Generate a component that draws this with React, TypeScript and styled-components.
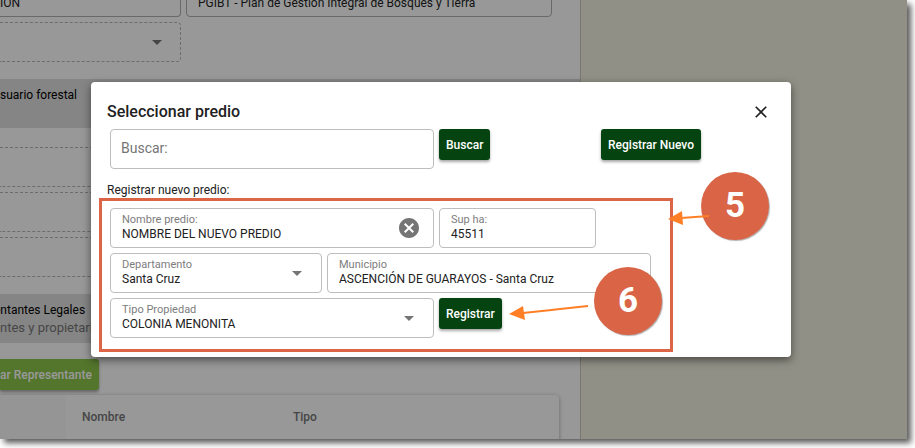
import React, { useState } from "react";
import styled, { createGlobalStyle, css } from "styled-components";
import { MdArrowDropDown, MdCancel, MdClose } from "react-icons/md";

const GlobalStyle = createGlobalStyle`
  * { box-sizing: border-box; }
  body { margin: 0; background: #fff; overflow: hidden; }
  body, button, input, select { font-family: Roboto, sans-serif; }
`;

const Frame = styled.div`
  position: relative;
  height: calc(100vh - 9px);
  margin-right: 8px;
  overflow: hidden;
  font-size: 12px;
  line-height: 16px;
`;

const Shell = styled.div`
  padding-bottom: 9px;
  & > ${Frame} { box-shadow: 4px 4px 6px rgba(0, 0, 0, 0.65); }
`;

const Page = styled.div`
  display: flex;
  height: 100%;
  background: #f0f0df;
`;

const Content = styled.main`
  flex: 0 1 581px;
  height: 100%;
  overflow: hidden;
  background: #fefefe;
  border-right: 1px solid #c8c8b8;
`;

const PageRow = styled.div`
  display: flex;
  gap: 5px;
  padding-right: 28px;
`;

const ScrolledRow = styled(PageRow)`
  margin-top: -23px;
  margin-bottom: 5px;
`;

const PageBox = styled.div<{ $width: number; $dashed?: boolean; $cut?: boolean }>`
  display: flex;
  align-items: center;
  flex: 0 1 ${(p) => p.$width}px;
  height: 40px;
  padding: 12px 11px 0;
  border: 1px ${(p) => (p.$dashed ? "dashed #b4b4b4" : "solid #b0b0b0")};
  border-radius: 4px;
  color: #222;
  white-space: nowrap;
  ${(p) =>
    p.$cut &&
    css`
      padding-left: 0;
      border-left: 0;
      border-radius: 0 4px 4px 0;
    `}
`;

const PageSelect = styled(PageBox)`
  justify-content: flex-end;
  padding: 0 11px;
  color: #757575;
`;

const Band = styled.section`
  height: 49px;
  margin: 17px 0 19px;
  padding-top: 8px;
  background: #dedede;
`;

const LegalBand = styled(Band)`
  margin-bottom: 16px;
`;

const BandTitle = styled.div`
  color: #000;
`;

const LegalTitle = styled(BandTitle)`
  text-indent: -6px;
`;

const BandText = styled.div`
  margin-top: 2px;
  color: #757575;
  font-size: 13px;
`;

const Stack = styled.div`
  display: grid;
  gap: 5px;
  padding-right: 28px;
`;

const Button = styled.button<{ $tone?: "dark" | "light" }>`
  height: 31px;
  padding: 0 7px;
  border: 0;
  border-radius: 3px;
  background: ${(p) => (p.$tone === "light" ? "#8bc34a" : "#054311")};
  color: #fff;
  font-size: 12px;
  font-weight: 500;
  white-space: nowrap;
  box-shadow: 0 2px 3px rgba(0, 0, 0, 0.35);
`;

const RepresentativeButton = styled(Button)`
  display: block;
  padding-left: 0;
  border-radius: 0 3px 3px 0;
`;

const Table = styled.table`
  width: calc(100% - 21px);
  height: 60px;
  margin-top: 5px;
  border-collapse: collapse;
  border-radius: 0 4px 0 0;
  background: #fefefe;
  box-shadow: 0 1px 4px rgba(0, 0, 0, 0.35);
  color: #757575;
  th { padding: 0 16px 16px; text-align: left; font-weight: 500; }
  th:first-child { width: 66px; background: #f8f8f8; }
  th:nth-child(2) { width: 211px; }
`;

const Backdrop = styled.div`
  position: absolute;
  inset: 0;
  display: flex;
  align-items: center;
  justify-content: center;
  padding-right: 25px;
  background: rgba(0, 0, 0, 0.4);
`;

const Dialog = styled.section`
  position: relative;
  width: 700px;
  max-width: 100%;
  padding: 16px 16px 19px;
  border-radius: 4px;
  background: #fff;
  box-shadow: 0 3px 9px rgba(0, 0, 0, 0.5);
`;

const DialogHeader = styled.header`
  display: flex;
  align-items: center;
  justify-content: space-between;
  height: 28px;
  padding-right: 4px;
`;

const DialogTitle = styled.h2`
  margin: 0;
  color: #212121;
  font-size: 16px;
  font-weight: 500;
  line-height: 24px;
`;

const IconButton = styled.button`
  display: flex;
  align-items: center;
  justify-content: center;
  padding: 0;
  border: 0;
  background: none;
  color: inherit;
`;

const FormRow = styled.div`
  display: flex;
  align-items: flex-start;
  gap: 5px;
  padding-left: 3px;
`;

const SearchRow = styled(FormRow)`
  margin-top: 3px;
  padding-right: 74px;
  & > :last-child { margin-left: auto; }
`;

const SearchInput = styled.input`
  flex: 0 1 324px;
  min-width: 0;
  height: 40px;
  padding: 0 10px 2px;
  border: 1px solid #bdbdbd;
  border-radius: 4px;
  outline: 0;
  color: #212121;
  font-size: 14px;
  &::placeholder { color: #757575; opacity: 1; }
`;

const SectionLabel = styled.p`
  margin: 13px 0 10px;
  color: #212121;
`;

const Form = styled.form`
  position: relative;
  display: grid;
  gap: 5px;
`;

const Highlight = styled.div`
  position: absolute;
  inset: -10px 102px -14px -8px;
  border: 3px solid #dc6547;
  pointer-events: none;
`;

const FieldBox = styled.div<{ $width: number }>`
  display: flex;
  align-items: center;
  flex: 0 1 ${(p) => p.$width}px;
  min-width: 0;
  height: 40px;
  padding: 0 12px 0 11px;
  border: 1px solid #bdbdbd;
  border-radius: 4px;
  color: #757575;
`;

const FieldBody = styled.div`
  display: flex;
  flex: 1;
  flex-direction: column;
  min-width: 0;
`;

const FieldLabel = styled.label`
  color: #7d7d7d;
  font-size: 11px;
  line-height: 12px;
`;

const controlStyle = css`
  width: 100%;
  height: 16px;
  padding: 0;
  border: 0;
  outline: 0;
  background: transparent;
  color: #212121;
  font-size: 12px;
  line-height: 16px;
`;

const TextInput = styled.input`
  ${controlStyle}
`;

const Select = styled.select`
  ${controlStyle}
  appearance: none;
`;

const Arrows = styled.svg`
  position: absolute;
  inset: 0;
  width: 700px;
  height: 275px;
  pointer-events: none;
`;

const StepBadge = styled.div<{ $left: number; $top: number }>`
  position: absolute;
  left: ${(p) => p.$left}px;
  top: ${(p) => p.$top}px;
  display: flex;
  align-items: center;
  justify-content: center;
  width: 68px;
  height: 68px;
  border-radius: 50%;
  background: #d96446;
  box-shadow: 1px 1px 1px rgba(0, 0, 0, 0.3);
  color: #fff;
  font: 700 35px/40px Roboto, sans-serif;
`;

interface FieldProps {
  id: string;
  label: string;
  width: number;
  initial: string;
  clearable?: boolean;
}

function TextField({ id, label, width, initial, clearable }: FieldProps) {
  const [value, setValue] = useState(initial);
  return (
    <FieldBox $width={width}>
      <FieldBody>
        <FieldLabel htmlFor={id}>{label}</FieldLabel>
        <TextInput id={id} value={value} onChange={(e) => setValue(e.target.value)} />
      </FieldBody>
      {clearable && (
        <IconButton type="button" aria-label="Borrar" onClick={() => setValue("")}>
          <MdCancel size={24} />
        </IconButton>
      )}
    </FieldBox>
  );
}

function SelectField({ id, label, width, initial }: FieldProps) {
  return (
    <FieldBox $width={width}>
      <FieldBody>
        <FieldLabel htmlFor={id}>{label}</FieldLabel>
        <Select id={id} defaultValue={initial}>
          <option>{initial}</option>
        </Select>
      </FieldBody>
      <MdArrowDropDown size={24} />
    </FieldBox>
  );
}

export default function App() {
  return (
    <Shell>
      <GlobalStyle />
      <Frame>
        <Page>
          <Content>
            <ScrolledRow>
              <PageBox $width={181} $cut>ION</PageBox>
              <PageBox $width={366}>PGIBT - Plan de Gestión Integral de Bosques y Tierra</PageBox>
            </ScrolledRow>
            <PageRow>
              <PageSelect $width={181} $dashed $cut>
                <MdArrowDropDown size={24} />
              </PageSelect>
            </PageRow>
            <Band>
              <BandTitle>suario forestal</BandTitle>
            </Band>
            <Stack>
              <PageBox $width={552} $dashed $cut />
              <PageBox $width={552} $dashed $cut />
              <PageBox $width={552} $dashed $cut />
            </Stack>
            <LegalBand>
              <LegalTitle>entantes Legales</LegalTitle>
              <BandText>ntes y propietarios</BandText>
            </LegalBand>
            <RepresentativeButton $tone="light">ar Representante</RepresentativeButton>
            <Table>
              <thead>
                <tr>
                  <th />
                  <th>Nombre</th>
                  <th>Tipo</th>
                </tr>
              </thead>
            </Table>
          </Content>
        </Page>
        <Backdrop>
          <Dialog role="dialog" aria-labelledby="dialog-title">
            <DialogHeader>
              <DialogTitle id="dialog-title">Seleccionar predio</DialogTitle>
              <IconButton type="button" aria-label="Cerrar">
                <MdClose size={20} color="#212121" />
              </IconButton>
            </DialogHeader>
            <SearchRow>
              <SearchInput aria-label="Buscar" placeholder="Buscar:" />
              <Button type="button">Buscar</Button>
              <Button type="button">Registrar Nuevo</Button>
            </SearchRow>
            <SectionLabel>Registrar nuevo predio:</SectionLabel>
            <Form onSubmit={(e) => e.preventDefault()}>
              <FormRow>
                <TextField id="nombre" label="Nombre predio:" width={324} initial="NOMBRE DEL NUEVO PREDIO" clearable />
                <TextField id="superficie" label="Sup ha:" width={157} initial="45511" />
              </FormRow>
              <FormRow>
                <SelectField id="departamento" label="Departamento" width={212} initial="Santa Cruz" />
                <TextField id="municipio" label="Municipio" width={324} initial="ASCENCIÓN DE GUARAYOS - Santa Cruz" />
              </FormRow>
              <FormRow>
                <SelectField id="tipo" label="Tipo Propiedad" width={324} initial="COLONIA MENONITA" />
                <Button type="submit">Registrar</Button>
              </FormRow>
              <Highlight />
            </Form>
            <StepBadge $left={610} $top={90}>5</StepBadge>
            <StepBadge $left={503} $top={185}>6</StepBadge>
            <Arrows viewBox="0 0 700 275" fill="#ff7f27" stroke="#ff7f27">
              <path d="M618 134 L590 136" strokeWidth="2" />
              <path d="M577 137 L591 129 L592 143 Z" stroke="none" />
              <path d="M497 224 L432 231" strokeWidth="2" />
              <path d="M418 232 L432 224 L434 238 Z" stroke="none" />
            </Arrows>
          </Dialog>
        </Backdrop>
      </Frame>
    </Shell>
  );
}
